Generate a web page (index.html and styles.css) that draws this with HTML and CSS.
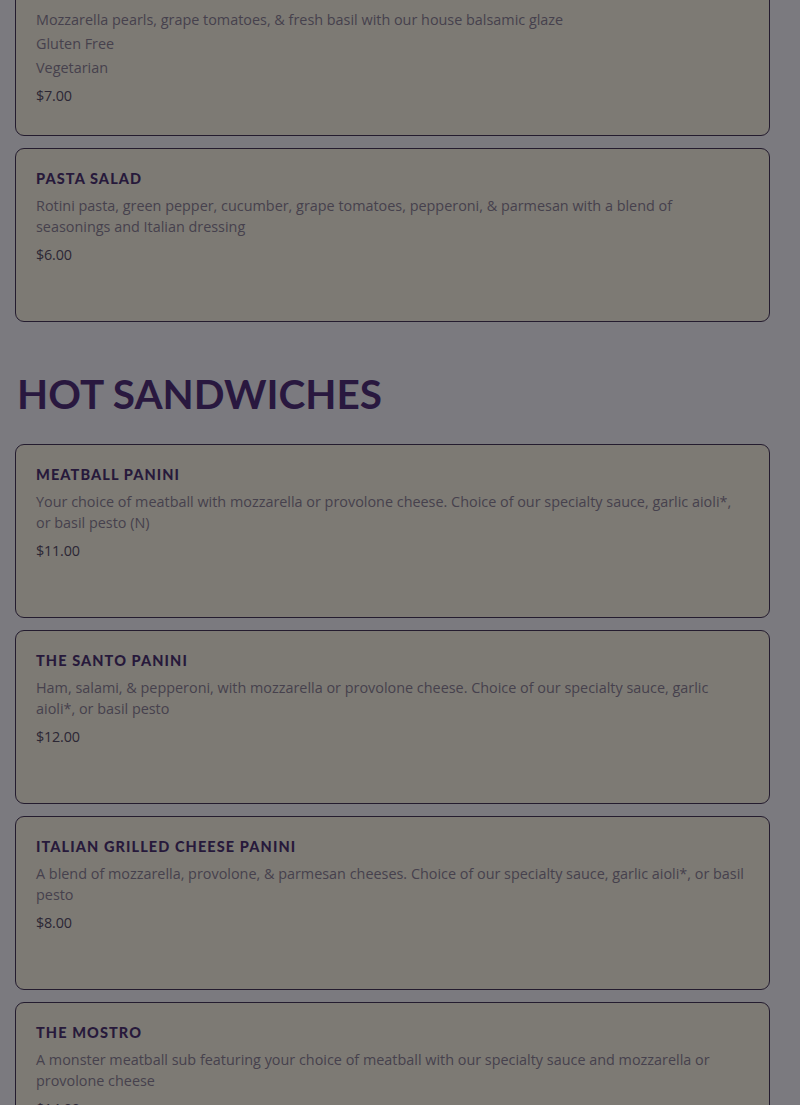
FILE: index.html
```html
<!DOCTYPE html>
<html>
<head>
<meta charset="utf-8">
<link rel="stylesheet" href="styles.css">
</head>
<body>
<main class="menu">
  <section class="section">
    <div class="cards first">
      <article class="card">
        <h3 class="title">CAPRESE SALAD</h3>
        <p class="desc">Mozzarella pearls, grape tomatoes, &amp; fresh basil with our house balsamic glaze</p>
        <p class="tag">Gluten Free</p>
        <p class="tag">Vegetarian</p>
        <p class="price">$7.00</p>
      </article>
      <article class="card">
        <h3 class="title">PASTA SALAD</h3>
        <p class="desc">Rotini pasta, green pepper, cucumber, grape tomatoes, pepperoni, &amp; parmesan with a blend of seasonings and Italian dressing</p>
        <p class="price">$6.00</p>
      </article>
    </div>
  </section>
  <section class="section">
    <h2 class="heading">HOT SANDWICHES</h2>
    <div class="cards">
      <article class="card">
        <h3 class="title">MEATBALL PANINI</h3>
        <p class="desc">Your choice of meatball with mozzarella or provolone cheese. Choice of our specialty sauce, garlic aioli*, or basil pesto (N)</p>
        <p class="price">$11.00</p>
      </article>
      <article class="card">
        <h3 class="title">THE SANTO PANINI</h3>
        <p class="desc">Ham, salami, &amp; pepperoni, with mozzarella or provolone cheese. Choice of our specialty sauce, garlic aioli*, or basil pesto</p>
        <p class="price">$12.00</p>
      </article>
      <article class="card">
        <h3 class="title">ITALIAN GRILLED CHEESE PANINI</h3>
        <p class="desc">A blend of mozzarella, provolone, &amp; parmesan cheeses. Choice of our specialty sauce, garlic aioli*, or basil pesto</p>
        <p class="price">$8.00</p>
      </article>
      <article class="card">
        <h3 class="title">THE MOSTRO</h3>
        <p class="desc">A monster meatball sub featuring your choice of meatball with our specialty sauce and mozzarella or provolone cheese</p>
        <p class="price">$14.00</p>
      </article>
    </div>
  </section>
</main>
</body>
</html>
```
FILE: styles.css
```css
html, body {
  margin: 0;
  padding: 0;
  background: #7b7a7f;
  overflow: hidden;
}
.menu {
  padding: 0 30px 0 15px;
}
.cards {
  display: flex;
  flex-direction: column;
  gap: 12px;
}
.cards.first {
  margin-top: -38px;
}
.card {
  box-sizing: border-box;
  height: 174px;
  background: #7d7a74;
  border: 1px solid #241c2f;
  border-radius: 9px;
  padding: 20px 20px 18px;
  font-family: "Open Sans", sans-serif;
}
.title {
  margin: 0;
  font-family: "Lato", sans-serif;
  font-weight: 900;
  font-size: 14.5px;
  line-height: 20px;
  letter-spacing: 1.1px;
  color: #27193b;
}
.desc {
  margin: 6px 0 0;
  font-size: 14.4px;
  line-height: 21px;
  color: #46414d;
}
.tag {
  margin: 3px 0 0;
  font-size: 14.4px;
  line-height: 21px;
  color: #46414d;
}
.price {
  margin: 7px 0 0;
  font-size: 14.4px;
  line-height: 21px;
  color: #2c2734;
  letter-spacing: -0.2px;
}
.heading {
  margin: 45px 0 23px 2px;
  font-family: "Lato", sans-serif;
  font-weight: 700;
  font-size: 40.5px;
  line-height: 54px;
  letter-spacing: 0;
  color: #29183f;
}
```
